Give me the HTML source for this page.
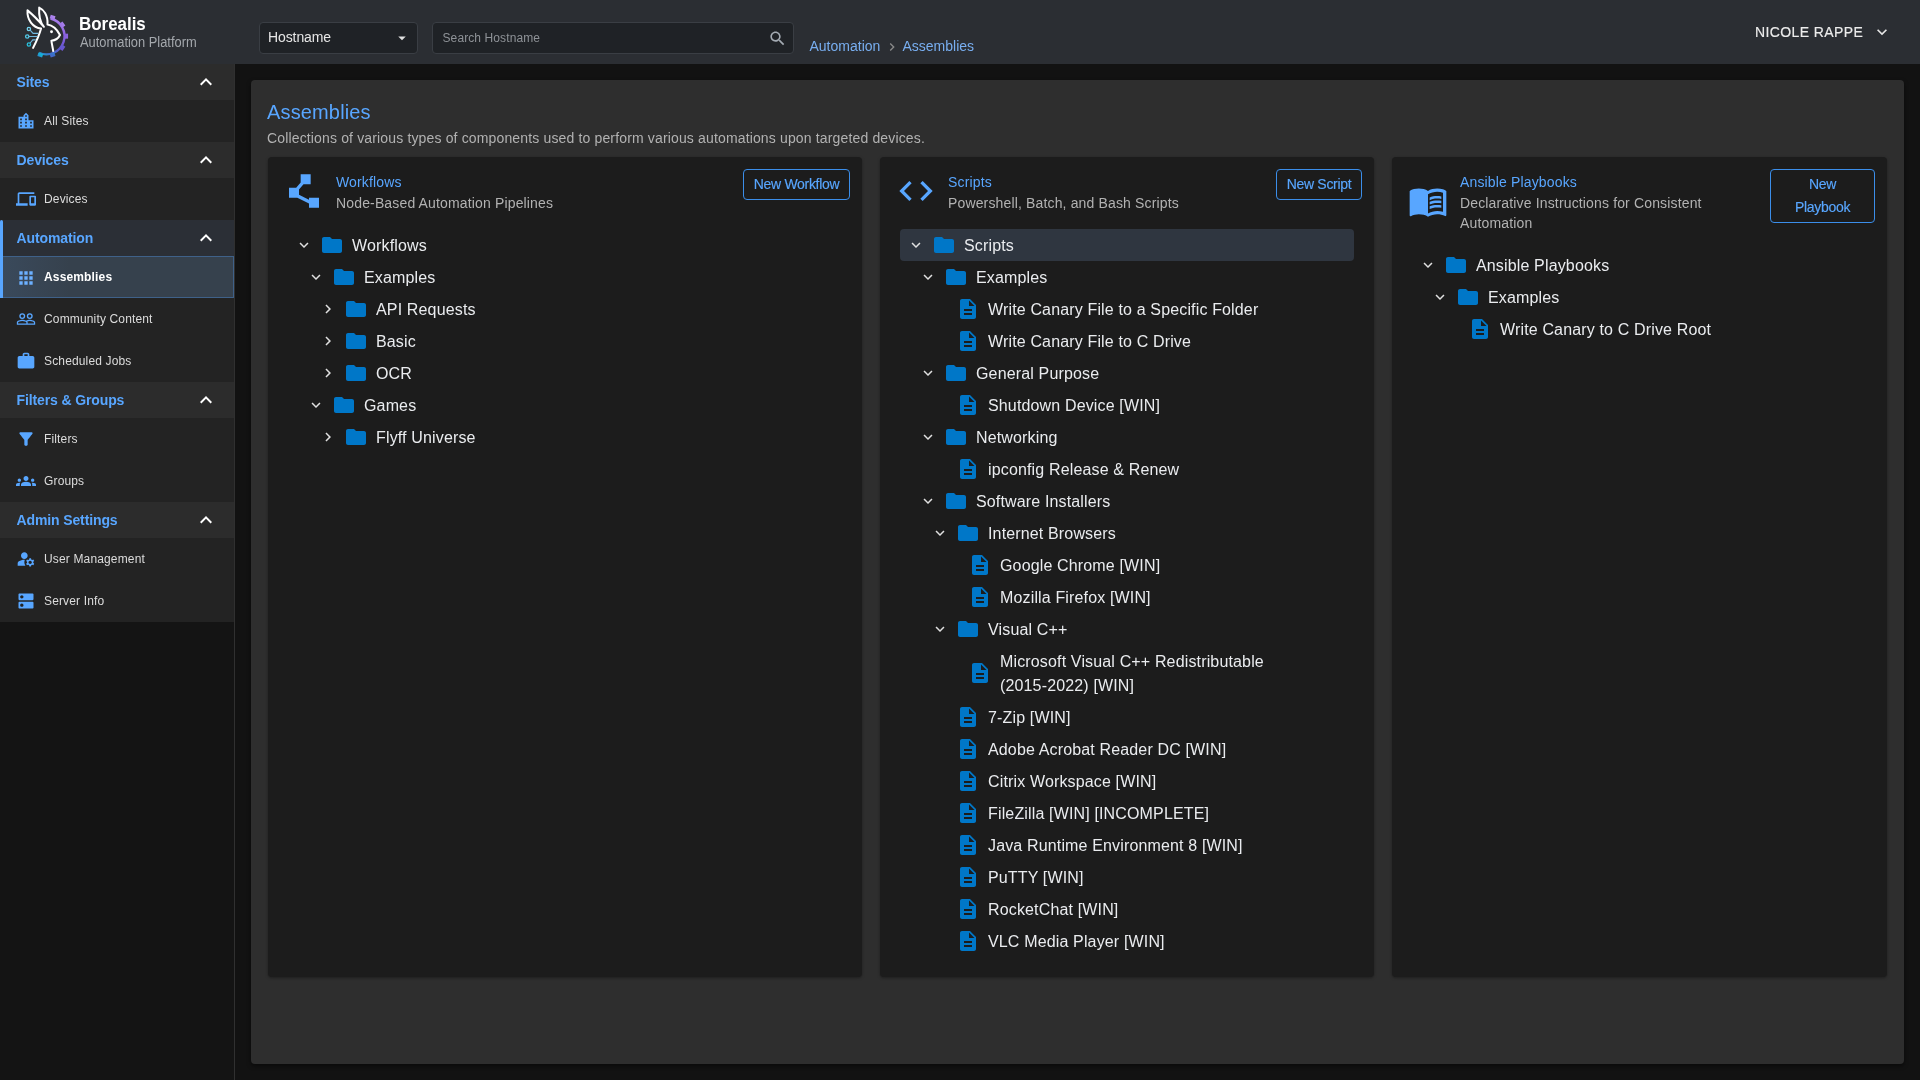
<!DOCTYPE html>
<html><head><meta charset="utf-8">
<style>
*{box-sizing:border-box;margin:0;padding:0}
html,body{width:1920px;height:1080px;overflow:hidden;background:#121212;font-family:"Liberation Sans",sans-serif;color:#e0e0e0}
.abs{position:absolute}
#hdr{position:absolute;left:0;top:0;width:1920px;height:64px;background:#2b2e33}
#side{position:absolute;left:0;top:64px;width:235px;height:1016px;background:#141414;border-right:1px solid #303030}
.sh{position:absolute;left:0;width:234px;height:36px;background:#2c2c2c;color:#58a6ff;font-weight:bold;font-size:14px;letter-spacing:-0.12px;display:flex;align-items:center;padding-left:16.5px}
.sh svg{position:absolute;left:194px;top:6px;width:24px;height:24px;fill:#fff}
.si{position:absolute;left:0;width:234px;height:42px;background:#232323;color:#dcdcdc;font-size:12px;letter-spacing:0.15px;display:flex;align-items:center;padding-left:44px}
.si svg{position:absolute;left:16px;top:11px;width:20px;height:20px;fill:#58a6ff}
#panel{position:absolute;left:251px;top:80px;width:1653px;height:984px;background:#2e2e2e;border-radius:4px;box-shadow:0 2px 4px rgba(0,0,0,.5)}
.card{position:absolute;top:157px;height:820px;background:#1c1c1c;border-radius:4px;box-shadow:0 1px 3px rgba(0,0,0,.35)}
.ctitle{position:absolute;font-size:14px;letter-spacing:0.15px;line-height:20px;color:#58a6ff}
.cdesc{position:absolute;font-size:14px;letter-spacing:0.15px;line-height:20px;color:#b2b2b2}
.cicon{position:absolute;width:40px;height:40px;fill:#58a6ff}
.btn{position:absolute;border:1px solid #3b8eea;border-radius:4px;color:#58a6ff;font-size:14px;line-height:23px;text-align:center;letter-spacing:-0.3px;-webkit-text-stroke:0.15px #58a6ff}
.tree{position:absolute}
.row{position:relative;height:32px;display:flex;align-items:center;font-size:16px;letter-spacing:0.15px;color:#eaecef;white-space:nowrap}
.row .ch{position:absolute;width:18px;height:18px;fill:#e0e0e0;top:7px}
.row .fi{position:absolute;width:24px;height:24px;fill:#0077c8;top:4px}
.row .tx{position:absolute;line-height:24px;top:5px}
.row.sel{background:#2f3640;border-radius:4px}
</style></head><body>
<div id="root" style="position:absolute;left:0;top:0;width:1920px;height:1080px;will-change:transform">
<div id="hdr">
  <svg class="abs" style="left:15px;top:0" width="60" height="64" viewBox="0 0 1012 1080">
    <defs><linearGradient id="gg" gradientUnits="userSpaceOnUse" x1="700" y1="250" x2="380" y2="930"><stop offset="0" stop-color="#b48cf0"/><stop offset="0.32" stop-color="#8c62e0"/><stop offset="0.6" stop-color="#6a55d0"/><stop offset="0.86" stop-color="#3c6cc8"/><stop offset="1" stop-color="#12b4d4"/></linearGradient></defs>
    <path d="M599 312 A306 306 0 1 1 406 890" fill="none" stroke="url(#gg)" stroke-width="40"/>
    <g fill="url(#gg)"><rect x="592" y="261" width="84" height="60" transform="rotate(18 634 291)"/><rect x="759" y="383" width="84" height="60" transform="rotate(54 801 413)"/><rect x="823" y="580" width="84" height="60" transform="rotate(90 865 610)"/><rect x="759" y="777" width="84" height="60" transform="rotate(126 801 807)"/><rect x="592" y="899" width="84" height="60" transform="rotate(162 634 929)"/><rect x="384" y="899" width="84" height="60" transform="rotate(198 426 929)"/></g>
    <path d="M305 808 C360 700 400 620 440 480 C300 470 200 330 211 175 C290 240 400 350 488 452 C420 370 400 250 408 128 C480 160 560 260 548 415 C610 425 700 480 759 590 C730 650 680 680 614 686 C620 740 635 800 645 860" fill="none" stroke="#fff" stroke-width="34" stroke-linejoin="round" stroke-linecap="round"/>
    <circle cx="616" cy="536" r="24" fill="#fff"/>
    <g fill="none" stroke-width="22"><circle cx="234" cy="489" r="28" stroke="#78d4f0"/><circle cx="206" cy="616" r="28" stroke="#50c8e6"/><circle cx="234" cy="752" r="28" stroke="#28c0dc"/></g>
    <path d="M255 510 L305 563 L389 563 M232 616 L380 616 M252 730 L300 672 L351 672" fill="none" stroke="#70b8e0" stroke-width="19"/>
  </svg>
  <div class="abs" style="left:79px;top:13px;font-size:18px;font-weight:bold;color:#fff;line-height:22px;transform:scaleX(0.94);transform-origin:0 0">Borealis</div>
  <div class="abs" style="left:80px;top:34px;font-size:14px;color:#a4a8ad;line-height:16px;transform:scaleX(0.92);transform-origin:0 0">Automation Platform</div>

  <div class="abs" style="left:259px;top:22px;width:159px;height:32px;background:#1f2226;border:1px solid #3a3e44;border-radius:4px"></div>
  <div class="abs" style="left:268px;top:28px;font-size:14px;line-height:18px;color:#e6e6e6;letter-spacing:-0.1px">Hostname</div>
  <svg class="abs" style="left:393px;top:29px" width="18" height="18" viewBox="0 0 24 24" fill="#e0e0e0"><path d="m7 10 5 5 5-5z"/></svg>

  <div class="abs" style="left:432px;top:22px;width:362px;height:32px;background:#1f2226;border:1px solid #3a3e44;border-radius:4px"></div>
  <div class="abs" style="left:442.5px;top:30px;font-size:12px;line-height:16px;color:#8e9297;letter-spacing:0.1px">Search Hostname</div>
  <svg class="abs" style="left:768px;top:29px" width="19" height="19" viewBox="0 0 24 24" fill="#a3aab2"><path d="M15.5 14h-.79l-.28-.27C15.41 12.59 16 11.11 16 9.5 16 5.91 13.09 3 9.5 3S3 5.91 3 9.5 5.91 16 9.5 16c1.61 0 3.09-.59 4.23-1.57l.27.28v.79l5 4.99L20.49 19zm-6 0C7.01 14 5 11.99 5 9.5S7.01 5 9.5 5 14 7.01 14 9.5 11.99 14 9.5 14"/></svg>

  <div class="abs" style="left:809.5px;top:37px;font-size:14px;line-height:18px;color:#78aef0">Automation</div>
  <svg class="abs" style="left:884px;top:39px" width="16" height="16" viewBox="0 0 24 24" fill="#8a8a8a"><path d="M10 6 8.59 7.41 13.17 12l-4.58 4.59L10 18l6-6z"/></svg>
  <div class="abs" style="left:902.5px;top:37px;font-size:14px;line-height:18px;color:#78aef0">Assemblies</div>

  <div class="abs" style="left:1755px;top:23px;font-size:14px;line-height:18px;color:#ececec;letter-spacing:0.4px;-webkit-text-stroke:0.15px #ececec">NICOLE RAPPE</div>
  <svg class="abs" style="left:1872px;top:22px" width="20" height="20" viewBox="0 0 24 24" fill="#e6e6e6"><path d="M7.41 8.59 12 13.17l4.59-4.58L18 10l-6 6-6-6z"/></svg>
</div>

<div id="side">
<div class="sh" style="top:0">Sites<svg viewBox="0 0 24 24"><path d="m12 8-6 6 1.41 1.41L12 10.83l4.59 4.58L18 14z"/></svg></div>
<div class="si" style="top:36px"><svg viewBox="0 0 24 24"><path d="M15 11V5l-3-3-3 3v2H3v14h18V11zm-8 8H5v-2h2zm0-4H5v-2h2zm0-4H5V9h2zm6 8h-2v-2h2zm0-4h-2v-2h2zm0-4h-2V9h2zm0-4h-2V5h2zm6 12h-2v-2h2zm0-4h-2v-2h2z"/></svg>All Sites</div>
<div class="sh" style="top:78px">Devices<svg viewBox="0 0 24 24"><path d="m12 8-6 6 1.41 1.41L12 10.83l4.59 4.58L18 14z"/></svg></div>
<div class="si" style="top:114px"><svg viewBox="0 0 24 24"><path d="M4 6h18V4H4c-1.1 0-2 .9-2 2v11H0v3h14v-3H4zm19 2h-6c-.55 0-1 .45-1 1v10c0 .55.45 1 1 1h6c.55 0 1-.45 1-1V9c0-.55-.45-1-1-1m-1 9h-4v-7h4z"/></svg>Devices</div>
<div class="sh" style="top:156px;background:#2b2f36">Automation<svg viewBox="0 0 24 24"><path d="m12 8-6 6 1.41 1.41L12 10.83l4.59 4.58L18 14z"/></svg></div>
<div class="si" style="top:192px;background:linear-gradient(90deg,#3a4a5c,#36414d 30%,#36414d);border-top:1px solid #3f6189;border-bottom:1px solid #3f6189;border-right:1px solid #3f6189;color:#fff;font-weight:bold"><svg viewBox="0 0 24 24"><path d="M4 8h4V4H4zm6 12h4v-4h-4zm-6 0h4v-4H4zm0-6h4v-4H4zm6 0h4v-4h-4zm6-10v4h4V4zm-6 4h4V4h-4zm6 6h4v-4h-4zm0 6h4v-4h-4z" fill="#6cb0ff"/></svg>Assemblies</div>
<div class="abs" style="left:0;top:156px;width:3px;height:78px;background:#58a6ff;border-radius:2px 2px 0 0"></div>
<div class="si" style="top:234px"><svg viewBox="0 0 24 24"><path d="M16.5 13c-1.2 0-3.07.34-4.5 1-1.43-.67-3.3-1-4.5-1C5.33 13 1 14.08 1 16.25V19h22v-2.75c0-2.17-4.33-3.25-6.5-3.25m-4 4.5h-10v-1.25c0-.54 2.56-1.75 5-1.75s5 1.21 5 1.75zm9 0H14v-1.25c0-.46-.2-.86-.52-1.22.88-.3 1.96-.53 3.02-.53 2.44 0 5 1.21 5 1.75z"/><circle cx="7.5" cy="8.5" r="2.75" fill="none" stroke="#58a6ff" stroke-width="1.6"/><circle cx="16.5" cy="8.5" r="2.75" fill="none" stroke="#58a6ff" stroke-width="1.6"/></svg>Community Content</div>
<div class="si" style="top:276px"><svg viewBox="0 0 24 24"><path d="M20 6h-4V4c0-1.11-.89-2-2-2h-4c-1.11 0-2 .89-2 2v2H4c-1.11 0-1.99.89-1.99 2L2 19c0 1.11.89 2 2 2h16c1.11 0 2-.89 2-2V8c0-1.11-.89-2-2-2m-6 0h-4V4h4z"/></svg>Scheduled Jobs</div>
<div class="sh" style="top:318px">Filters &amp; Groups<svg viewBox="0 0 24 24"><path d="m12 8-6 6 1.41 1.41L12 10.83l4.59 4.58L18 14z"/></svg></div>
<div class="si" style="top:354px"><svg viewBox="0 0 24 24"><path d="M4.25 5.61C6.27 8.2 10 13 10 13v6c0 .55.45 1 1 1h2c.55 0 1-.45 1-1v-6s3.72-4.8 5.74-7.39c.51-.66.04-1.61-.79-1.61H5.04c-.83 0-1.3.95-.79 1.61"/></svg>Filters</div>
<div class="si" style="top:396px"><svg viewBox="0 0 24 24"><path d="M12 12.75c1.63 0 3.07.39 4.24.9 1.08.48 1.76 1.56 1.76 2.73V18H6v-1.61c0-1.18.68-2.26 1.76-2.73 1.17-.52 2.61-.91 4.24-.91M4 13c1.1 0 2-.9 2-2s-.9-2-2-2-2 .9-2 2 .9 2 2 2m1.13 1.1c-.37-.06-.74-.1-1.13-.1-.99 0-1.93.21-2.78.58C.48 14.9 0 15.62 0 16.43V18h4.5v-1.61c0-.83.23-1.61.63-2.29M20 13c1.1 0 2-.9 2-2s-.9-2-2-2-2 .9-2 2 .9 2 2 2m4 3.43c0-.81-.48-1.53-1.22-1.85-.85-.37-1.79-.58-2.78-.58-.39 0-.76.04-1.13.1.4.68.63 1.46.63 2.29V18H24zM12 6c1.66 0 3 1.34 3 3s-1.34 3-3 3-3-1.34-3-3 1.34-3 3-3"/></svg>Groups</div>
<div class="sh" style="top:438px">Admin Settings<svg viewBox="0 0 24 24"><path d="m12 8-6 6 1.41 1.41L12 10.83l4.59 4.58L18 14z"/></svg></div>
<div class="si" style="top:474px"><svg viewBox="0 0 24 24"><path d="M10.67 13.02c-.22-.01-.44-.02-.67-.02-2.42 0-4.68.67-6.61 1.82-.88.52-1.39 1.5-1.39 2.53V20h9.26c-.79-1.13-1.26-2.51-1.26-4 0-1.07.25-2.07.67-2.98M20.75 16c0-.22-.03-.42-.06-.63l1.14-1.01-1-1.73-1.45.49c-.32-.27-.68-.48-1.08-.63L18 11h-2l-.3 1.49c-.4.15-.76.36-1.08.63l-1.45-.49-1 1.73 1.14 1.01c-.03.21-.06.41-.06.63s.03.42.06.63l-1.14 1.01 1 1.73 1.45-.49c.32.27.68.48 1.08.63L16 21h2l.3-1.49c.4-.15.76-.36 1.08-.63l1.45.49 1-1.73-1.14-1.01c.03-.21.06-.41.06-.63M17 18c-1.1 0-2-.9-2-2s.9-2 2-2 2 .9 2 2-.9 2-2 2m-7-6c2.21 0 4-1.79 4-4s-1.79-4-4-4-4 1.79-4 4 1.79 4 4 4"/></svg>User Management</div>
<div class="si" style="top:516px"><svg viewBox="0 0 24 24"><path d="M20 13H4c-.55 0-1 .45-1 1v6c0 .55.45 1 1 1h16c.55 0 1-.45 1-1v-6c0-.55-.45-1-1-1M7 19c-1.1 0-2-.9-2-2s.9-2 2-2 2 .9 2 2-.9 2-2 2M20 3H4c-.55 0-1 .45-1 1v6c0 .55.45 1 1 1h16c.55 0 1-.45 1-1V4c0-.55-.45-1-1-1M7 9c-1.1 0-2-.9-2-2s.9-2 2-2 2 .9 2 2-.9 2-2 2"/></svg>Server Info</div>

</div>

<div id="panel"></div>
<!--CONTENT-->
<div class="abs" style="left:267px;top:99px;font-size:20px;line-height:26px;color:#58a6ff;letter-spacing:0.15px">Assemblies</div>
<div class="abs" style="left:267px;top:128px;font-size:14px;line-height:20px;color:#b2b2b2;letter-spacing:0.15px">Collections of various types of components used to perform various automations upon targeted devices.</div>
<div class="card" style="left:268px;width:594px"></div>
<div class="card" style="left:880px;width:494px"></div>
<div class="card" style="left:1392px;width:495px"></div>
<svg class="cicon" style="left:284px;top:171px" viewBox="0 0 24 24"><path d="M15 16v1.26l-6-3v-3.17L11.7 8H16V2h-6v4.9L7.3 10H3v6h5l7 3.5V22h6v-6z"/></svg>
<div class="ctitle" style="left:336px;top:172px">Workflows</div>
<div class="cdesc" style="left:336px;top:193px">Node-Based Automation Pipelines</div>
<div class="btn" style="left:743px;top:169px;width:107px;padding:3px 0">New Workflow</div>
<div class="tree" style="left:288px;top:229px;width:554px">
<div class="row" style="height:32px"><svg class="ch" style="left:7px;top:7px" viewBox="0 0 24 24"><path d="M16.59 8.59 12 13.17 7.41 8.59 6 10l6 6 6-6z"/></svg><svg class="fi" style="left:32px;top:4px" viewBox="0 0 24 24"><path d="M10 4H4c-1.1 0-1.99.9-1.99 2L2 18c0 1.1.9 2 2 2h16c1.1 0 2-.9 2-2V8c0-1.1-.9-2-2-2h-8z"/></svg><div class="tx" style="left:64px">Workflows</div></div>
<div class="row" style="height:32px"><svg class="ch" style="left:19px;top:7px" viewBox="0 0 24 24"><path d="M16.59 8.59 12 13.17 7.41 8.59 6 10l6 6 6-6z"/></svg><svg class="fi" style="left:44px;top:4px" viewBox="0 0 24 24"><path d="M10 4H4c-1.1 0-1.99.9-1.99 2L2 18c0 1.1.9 2 2 2h16c1.1 0 2-.9 2-2V8c0-1.1-.9-2-2-2h-8z"/></svg><div class="tx" style="left:76px">Examples</div></div>
<div class="row" style="height:32px"><svg class="ch" style="left:31px;top:7px" viewBox="0 0 24 24"><path d="M10 6 8.59 7.41 13.17 12l-4.58 4.59L10 18l6-6z"/></svg><svg class="fi" style="left:56px;top:4px" viewBox="0 0 24 24"><path d="M10 4H4c-1.1 0-1.99.9-1.99 2L2 18c0 1.1.9 2 2 2h16c1.1 0 2-.9 2-2V8c0-1.1-.9-2-2-2h-8z"/></svg><div class="tx" style="left:88px">API Requests</div></div>
<div class="row" style="height:32px"><svg class="ch" style="left:31px;top:7px" viewBox="0 0 24 24"><path d="M10 6 8.59 7.41 13.17 12l-4.58 4.59L10 18l6-6z"/></svg><svg class="fi" style="left:56px;top:4px" viewBox="0 0 24 24"><path d="M10 4H4c-1.1 0-1.99.9-1.99 2L2 18c0 1.1.9 2 2 2h16c1.1 0 2-.9 2-2V8c0-1.1-.9-2-2-2h-8z"/></svg><div class="tx" style="left:88px">Basic</div></div>
<div class="row" style="height:32px"><svg class="ch" style="left:31px;top:7px" viewBox="0 0 24 24"><path d="M10 6 8.59 7.41 13.17 12l-4.58 4.59L10 18l6-6z"/></svg><svg class="fi" style="left:56px;top:4px" viewBox="0 0 24 24"><path d="M10 4H4c-1.1 0-1.99.9-1.99 2L2 18c0 1.1.9 2 2 2h16c1.1 0 2-.9 2-2V8c0-1.1-.9-2-2-2h-8z"/></svg><div class="tx" style="left:88px">OCR</div></div>
<div class="row" style="height:32px"><svg class="ch" style="left:19px;top:7px" viewBox="0 0 24 24"><path d="M16.59 8.59 12 13.17 7.41 8.59 6 10l6 6 6-6z"/></svg><svg class="fi" style="left:44px;top:4px" viewBox="0 0 24 24"><path d="M10 4H4c-1.1 0-1.99.9-1.99 2L2 18c0 1.1.9 2 2 2h16c1.1 0 2-.9 2-2V8c0-1.1-.9-2-2-2h-8z"/></svg><div class="tx" style="left:76px">Games</div></div>
<div class="row" style="height:32px"><svg class="ch" style="left:31px;top:7px" viewBox="0 0 24 24"><path d="M10 6 8.59 7.41 13.17 12l-4.58 4.59L10 18l6-6z"/></svg><svg class="fi" style="left:56px;top:4px" viewBox="0 0 24 24"><path d="M10 4H4c-1.1 0-1.99.9-1.99 2L2 18c0 1.1.9 2 2 2h16c1.1 0 2-.9 2-2V8c0-1.1-.9-2-2-2h-8z"/></svg><div class="tx" style="left:88px">Flyff Universe</div></div>
</div>
<svg class="cicon" style="left:896px;top:171px" viewBox="0 0 24 24"><path d="M9.4 16.6 4.8 12l4.6-4.6L8 6l-6 6 6 6zm5.2 0 4.6-4.6-4.6-4.6L16 6l6 6-6 6z"/></svg>
<div class="ctitle" style="left:948px;top:172px">Scripts</div>
<div class="cdesc" style="left:948px;top:193px">Powershell, Batch, and Bash Scripts</div>
<div class="btn" style="left:1276px;top:169px;width:86px;padding:3px 0">New Script</div>
<div class="tree" style="left:900px;top:229px;width:454px">
<div class="row sel" style="height:32px"><svg class="ch" style="left:7px;top:7px" viewBox="0 0 24 24"><path d="M16.59 8.59 12 13.17 7.41 8.59 6 10l6 6 6-6z"/></svg><svg class="fi" style="left:32px;top:4px" viewBox="0 0 24 24"><path d="M10 4H4c-1.1 0-1.99.9-1.99 2L2 18c0 1.1.9 2 2 2h16c1.1 0 2-.9 2-2V8c0-1.1-.9-2-2-2h-8z"/></svg><div class="tx" style="left:64px">Scripts</div></div>
<div class="row" style="height:32px"><svg class="ch" style="left:19px;top:7px" viewBox="0 0 24 24"><path d="M16.59 8.59 12 13.17 7.41 8.59 6 10l6 6 6-6z"/></svg><svg class="fi" style="left:44px;top:4px" viewBox="0 0 24 24"><path d="M10 4H4c-1.1 0-1.99.9-1.99 2L2 18c0 1.1.9 2 2 2h16c1.1 0 2-.9 2-2V8c0-1.1-.9-2-2-2h-8z"/></svg><div class="tx" style="left:76px">Examples</div></div>
<div class="row" style="height:32px"><svg class="fi" style="left:56px;top:4px" viewBox="0 0 24 24"><path d="M14 2H6c-1.1 0-1.99.9-1.99 2L4 20c0 1.1.89 2 1.99 2H18c1.1 0 2-.9 2-2V8zm2 16H8v-2h8zm0-4H8v-2h8zm-3-5V3.5L18.5 9z"/></svg><div class="tx" style="left:88px">Write Canary File to a Specific Folder</div></div>
<div class="row" style="height:32px"><svg class="fi" style="left:56px;top:4px" viewBox="0 0 24 24"><path d="M14 2H6c-1.1 0-1.99.9-1.99 2L4 20c0 1.1.89 2 1.99 2H18c1.1 0 2-.9 2-2V8zm2 16H8v-2h8zm0-4H8v-2h8zm-3-5V3.5L18.5 9z"/></svg><div class="tx" style="left:88px">Write Canary File to C Drive</div></div>
<div class="row" style="height:32px"><svg class="ch" style="left:19px;top:7px" viewBox="0 0 24 24"><path d="M16.59 8.59 12 13.17 7.41 8.59 6 10l6 6 6-6z"/></svg><svg class="fi" style="left:44px;top:4px" viewBox="0 0 24 24"><path d="M10 4H4c-1.1 0-1.99.9-1.99 2L2 18c0 1.1.9 2 2 2h16c1.1 0 2-.9 2-2V8c0-1.1-.9-2-2-2h-8z"/></svg><div class="tx" style="left:76px">General Purpose</div></div>
<div class="row" style="height:32px"><svg class="fi" style="left:56px;top:4px" viewBox="0 0 24 24"><path d="M14 2H6c-1.1 0-1.99.9-1.99 2L4 20c0 1.1.89 2 1.99 2H18c1.1 0 2-.9 2-2V8zm2 16H8v-2h8zm0-4H8v-2h8zm-3-5V3.5L18.5 9z"/></svg><div class="tx" style="left:88px">Shutdown Device [WIN]</div></div>
<div class="row" style="height:32px"><svg class="ch" style="left:19px;top:7px" viewBox="0 0 24 24"><path d="M16.59 8.59 12 13.17 7.41 8.59 6 10l6 6 6-6z"/></svg><svg class="fi" style="left:44px;top:4px" viewBox="0 0 24 24"><path d="M10 4H4c-1.1 0-1.99.9-1.99 2L2 18c0 1.1.9 2 2 2h16c1.1 0 2-.9 2-2V8c0-1.1-.9-2-2-2h-8z"/></svg><div class="tx" style="left:76px">Networking</div></div>
<div class="row" style="height:32px"><svg class="fi" style="left:56px;top:4px" viewBox="0 0 24 24"><path d="M14 2H6c-1.1 0-1.99.9-1.99 2L4 20c0 1.1.89 2 1.99 2H18c1.1 0 2-.9 2-2V8zm2 16H8v-2h8zm0-4H8v-2h8zm-3-5V3.5L18.5 9z"/></svg><div class="tx" style="left:88px">ipconfig Release &amp; Renew</div></div>
<div class="row" style="height:32px"><svg class="ch" style="left:19px;top:7px" viewBox="0 0 24 24"><path d="M16.59 8.59 12 13.17 7.41 8.59 6 10l6 6 6-6z"/></svg><svg class="fi" style="left:44px;top:4px" viewBox="0 0 24 24"><path d="M10 4H4c-1.1 0-1.99.9-1.99 2L2 18c0 1.1.9 2 2 2h16c1.1 0 2-.9 2-2V8c0-1.1-.9-2-2-2h-8z"/></svg><div class="tx" style="left:76px">Software Installers</div></div>
<div class="row" style="height:32px"><svg class="ch" style="left:31px;top:7px" viewBox="0 0 24 24"><path d="M16.59 8.59 12 13.17 7.41 8.59 6 10l6 6 6-6z"/></svg><svg class="fi" style="left:56px;top:4px" viewBox="0 0 24 24"><path d="M10 4H4c-1.1 0-1.99.9-1.99 2L2 18c0 1.1.9 2 2 2h16c1.1 0 2-.9 2-2V8c0-1.1-.9-2-2-2h-8z"/></svg><div class="tx" style="left:88px">Internet Browsers</div></div>
<div class="row" style="height:32px"><svg class="fi" style="left:68px;top:4px" viewBox="0 0 24 24"><path d="M14 2H6c-1.1 0-1.99.9-1.99 2L4 20c0 1.1.89 2 1.99 2H18c1.1 0 2-.9 2-2V8zm2 16H8v-2h8zm0-4H8v-2h8zm-3-5V3.5L18.5 9z"/></svg><div class="tx" style="left:100px">Google Chrome [WIN]</div></div>
<div class="row" style="height:32px"><svg class="fi" style="left:68px;top:4px" viewBox="0 0 24 24"><path d="M14 2H6c-1.1 0-1.99.9-1.99 2L4 20c0 1.1.89 2 1.99 2H18c1.1 0 2-.9 2-2V8zm2 16H8v-2h8zm0-4H8v-2h8zm-3-5V3.5L18.5 9z"/></svg><div class="tx" style="left:100px">Mozilla Firefox [WIN]</div></div>
<div class="row" style="height:32px"><svg class="ch" style="left:31px;top:7px" viewBox="0 0 24 24"><path d="M16.59 8.59 12 13.17 7.41 8.59 6 10l6 6 6-6z"/></svg><svg class="fi" style="left:56px;top:4px" viewBox="0 0 24 24"><path d="M10 4H4c-1.1 0-1.99.9-1.99 2L2 18c0 1.1.9 2 2 2h16c1.1 0 2-.9 2-2V8c0-1.1-.9-2-2-2h-8z"/></svg><div class="tx" style="left:88px">Visual C++</div></div>
<div class="row" style="height:56px"><svg class="fi" style="left:68px;top:16px" viewBox="0 0 24 24"><path d="M14 2H6c-1.1 0-1.99.9-1.99 2L4 20c0 1.1.89 2 1.99 2H18c1.1 0 2-.9 2-2V8zm2 16H8v-2h8zm0-4H8v-2h8zm-3-5V3.5L18.5 9z"/></svg><div class="tx" style="left:100px;white-space:normal;width:346px">Microsoft Visual C++ Redistributable<br>(2015-2022) [WIN]</div></div>
<div class="row" style="height:32px"><svg class="fi" style="left:56px;top:4px" viewBox="0 0 24 24"><path d="M14 2H6c-1.1 0-1.99.9-1.99 2L4 20c0 1.1.89 2 1.99 2H18c1.1 0 2-.9 2-2V8zm2 16H8v-2h8zm0-4H8v-2h8zm-3-5V3.5L18.5 9z"/></svg><div class="tx" style="left:88px">7-Zip [WIN]</div></div>
<div class="row" style="height:32px"><svg class="fi" style="left:56px;top:4px" viewBox="0 0 24 24"><path d="M14 2H6c-1.1 0-1.99.9-1.99 2L4 20c0 1.1.89 2 1.99 2H18c1.1 0 2-.9 2-2V8zm2 16H8v-2h8zm0-4H8v-2h8zm-3-5V3.5L18.5 9z"/></svg><div class="tx" style="left:88px">Adobe Acrobat Reader DC [WIN]</div></div>
<div class="row" style="height:32px"><svg class="fi" style="left:56px;top:4px" viewBox="0 0 24 24"><path d="M14 2H6c-1.1 0-1.99.9-1.99 2L4 20c0 1.1.89 2 1.99 2H18c1.1 0 2-.9 2-2V8zm2 16H8v-2h8zm0-4H8v-2h8zm-3-5V3.5L18.5 9z"/></svg><div class="tx" style="left:88px">Citrix Workspace [WIN]</div></div>
<div class="row" style="height:32px"><svg class="fi" style="left:56px;top:4px" viewBox="0 0 24 24"><path d="M14 2H6c-1.1 0-1.99.9-1.99 2L4 20c0 1.1.89 2 1.99 2H18c1.1 0 2-.9 2-2V8zm2 16H8v-2h8zm0-4H8v-2h8zm-3-5V3.5L18.5 9z"/></svg><div class="tx" style="left:88px">FileZilla [WIN] [INCOMPLETE]</div></div>
<div class="row" style="height:32px"><svg class="fi" style="left:56px;top:4px" viewBox="0 0 24 24"><path d="M14 2H6c-1.1 0-1.99.9-1.99 2L4 20c0 1.1.89 2 1.99 2H18c1.1 0 2-.9 2-2V8zm2 16H8v-2h8zm0-4H8v-2h8zm-3-5V3.5L18.5 9z"/></svg><div class="tx" style="left:88px">Java Runtime Environment 8 [WIN]</div></div>
<div class="row" style="height:32px"><svg class="fi" style="left:56px;top:4px" viewBox="0 0 24 24"><path d="M14 2H6c-1.1 0-1.99.9-1.99 2L4 20c0 1.1.89 2 1.99 2H18c1.1 0 2-.9 2-2V8zm2 16H8v-2h8zm0-4H8v-2h8zm-3-5V3.5L18.5 9z"/></svg><div class="tx" style="left:88px">PuTTY [WIN]</div></div>
<div class="row" style="height:32px"><svg class="fi" style="left:56px;top:4px" viewBox="0 0 24 24"><path d="M14 2H6c-1.1 0-1.99.9-1.99 2L4 20c0 1.1.89 2 1.99 2H18c1.1 0 2-.9 2-2V8zm2 16H8v-2h8zm0-4H8v-2h8zm-3-5V3.5L18.5 9z"/></svg><div class="tx" style="left:88px">RocketChat [WIN]</div></div>
<div class="row" style="height:32px"><svg class="fi" style="left:56px;top:4px" viewBox="0 0 24 24"><path d="M14 2H6c-1.1 0-1.99.9-1.99 2L4 20c0 1.1.89 2 1.99 2H18c1.1 0 2-.9 2-2V8zm2 16H8v-2h8zm0-4H8v-2h8zm-3-5V3.5L18.5 9z"/></svg><div class="tx" style="left:88px">VLC Media Player [WIN]</div></div>
</div>
<svg class="cicon" style="left:1408px;top:181px" viewBox="0 0 24 24"><path d="M21 5c-1.11-.35-2.33-.5-3.5-.5-1.95 0-4.05.4-5.5 1.5-1.45-1.1-3.55-1.5-5.5-1.5S2.45 4.9 1 6v14.65c0 .25.25.5.5.5.1 0 .15-.05.25-.05C3.1 20.45 5.05 20 6.5 20c1.95 0 4.05.4 5.5 1.5 1.35-.85 3.8-1.5 5.5-1.5 1.65 0 3.35.3 4.75 1.05.1.05.15.05.25.05.25 0 .5-.25.5-.5V6c-.6-.45-1.25-.75-2-1m0 13.5c-1.1-.35-2.3-.5-3.5-.5-1.7 0-4.15.65-5.5 1.5V8c1.35-.85 3.8-1.5 5.5-1.5 1.2 0 2.4.15 3.5.5z"/><path d="M17.5 10.5c.88 0 1.73.09 2.5.26V9.24c-.79-.15-1.64-.24-2.5-.24-1.7 0-3.24.29-4.5.83v1.66c1.13-.64 2.7-.99 4.5-.99M13 12.49v1.66c1.13-.64 2.7-.99 4.5-.99.88 0 1.73.09 2.5.26V11.9c-.79-.15-1.64-.24-2.5-.24-1.7 0-3.24.3-4.5.83m4.5 1.84c-1.7 0-3.24.29-4.5.83v1.66c1.13-.64 2.7-.99 4.5-.99.88 0 1.73.09 2.5.26v-1.52c-.79-.16-1.64-.24-2.5-.24"/></svg>
<div class="ctitle" style="left:1460px;top:172px">Ansible Playbooks</div>
<div class="cdesc" style="left:1460px;top:193px;width:280px">Declarative Instructions for Consistent<br>Automation</div>
<div class="btn" style="left:1770px;top:169px;width:105px;padding:3px 0">New<br>Playbook</div>
<div class="tree" style="left:1412px;top:249px;width:455px">
<div class="row" style="height:32px"><svg class="ch" style="left:7px;top:7px" viewBox="0 0 24 24"><path d="M16.59 8.59 12 13.17 7.41 8.59 6 10l6 6 6-6z"/></svg><svg class="fi" style="left:32px;top:4px" viewBox="0 0 24 24"><path d="M10 4H4c-1.1 0-1.99.9-1.99 2L2 18c0 1.1.9 2 2 2h16c1.1 0 2-.9 2-2V8c0-1.1-.9-2-2-2h-8z"/></svg><div class="tx" style="left:64px">Ansible Playbooks</div></div>
<div class="row" style="height:32px"><svg class="ch" style="left:19px;top:7px" viewBox="0 0 24 24"><path d="M16.59 8.59 12 13.17 7.41 8.59 6 10l6 6 6-6z"/></svg><svg class="fi" style="left:44px;top:4px" viewBox="0 0 24 24"><path d="M10 4H4c-1.1 0-1.99.9-1.99 2L2 18c0 1.1.9 2 2 2h16c1.1 0 2-.9 2-2V8c0-1.1-.9-2-2-2h-8z"/></svg><div class="tx" style="left:76px">Examples</div></div>
<div class="row" style="height:32px"><svg class="fi" style="left:56px;top:4px" viewBox="0 0 24 24"><path d="M14 2H6c-1.1 0-1.99.9-1.99 2L4 20c0 1.1.89 2 1.99 2H18c1.1 0 2-.9 2-2V8zm2 16H8v-2h8zm0-4H8v-2h8zm-3-5V3.5L18.5 9z"/></svg><div class="tx" style="left:88px">Write Canary to C Drive Root</div></div>
</div>
<!--/CONTENT-->
</div>
</body></html>
